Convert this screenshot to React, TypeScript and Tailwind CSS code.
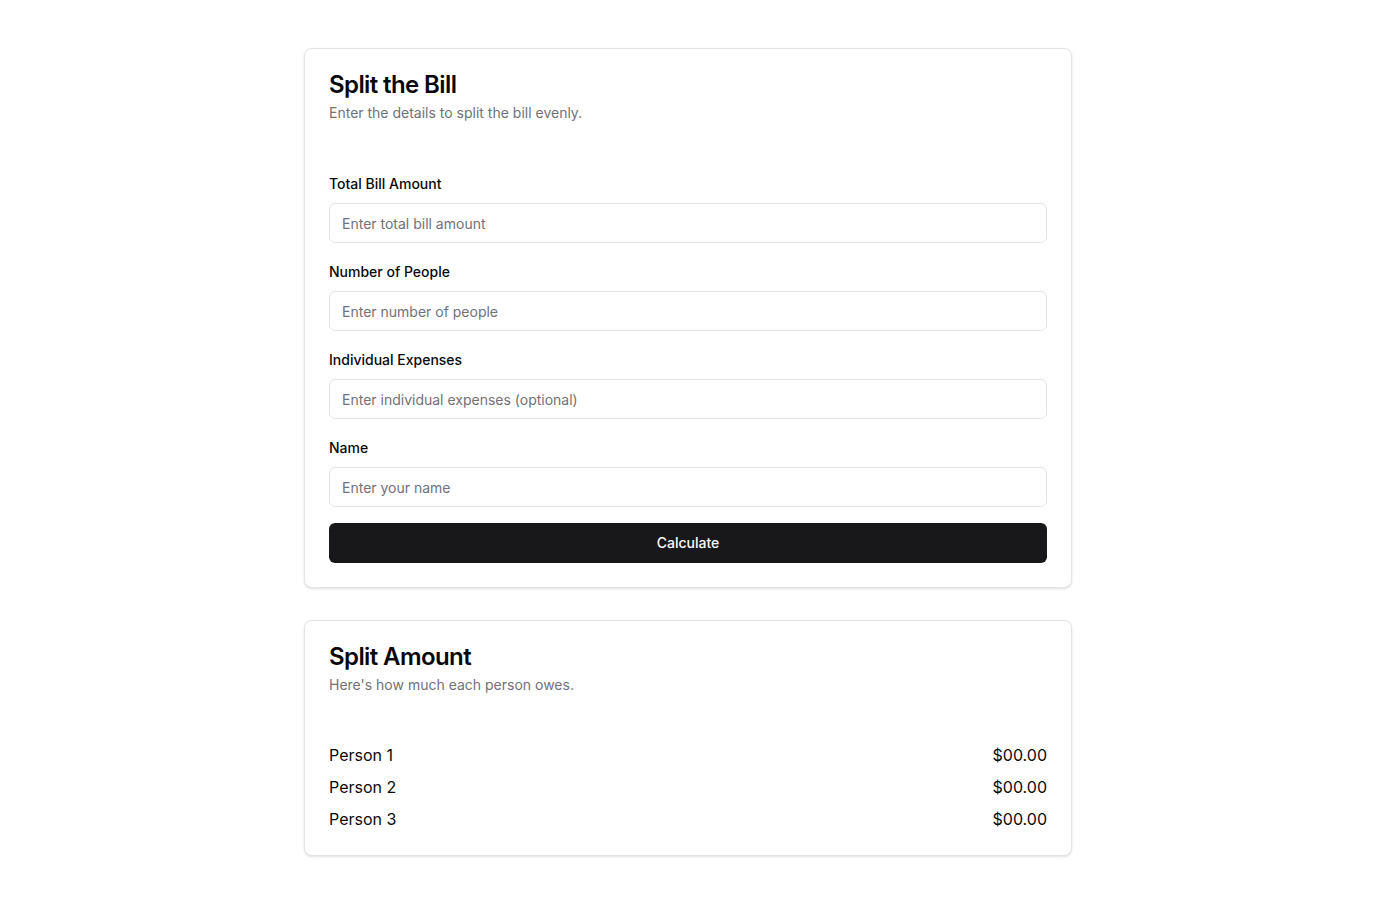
import { useState } from "react"

const fields = [
  { id: "total", label: "Total Bill Amount", placeholder: "Enter total bill amount" },
  { id: "people", label: "Number of People", placeholder: "Enter number of people" },
  { id: "expenses", label: "Individual Expenses", placeholder: "Enter individual expenses (optional)" },
  { id: "name", label: "Name", placeholder: "Enter your name" },
]

const people = ["Person 1", "Person 2", "Person 3"]

export default function App() {
  const [values, setValues] = useState<Record<string, string>>({})

  return (
    <div className="min-h-screen bg-white font-['Inter',sans-serif] text-[#09090b]">
      <div className="mx-auto max-w-3xl py-12 space-y-8">
        <div className="rounded-lg border border-[#e4e4e7] bg-white shadow-sm">
          <div className="flex flex-col space-y-1.5 p-6">
            <h3 className="text-2xl font-semibold leading-none tracking-tight">Split the Bill</h3>
            <p className="text-sm text-[#71717a]">Enter the details to split the bill evenly.</p>
          </div>
          <div className="p-6">
            <form className="space-y-4" onSubmit={(e) => e.preventDefault()}>
              {fields.map((f) => (
                <div key={f.id} className="space-y-2">
                  <div>
                    <label htmlFor={f.id} className="text-sm font-medium leading-none">
                      {f.label}
                    </label>
                  </div>
                  <input
                    id={f.id}
                    value={values[f.id] || ""}
                    onChange={(e) => setValues({ ...values, [f.id]: e.target.value })}
                    placeholder={f.placeholder}
                    className="flex h-10 w-full rounded-md border border-[#e4e4e7] bg-white px-3 py-2 text-sm placeholder:text-[#71717a] outline-none"
                  />
                </div>
              ))}
              <button
                type="submit"
                className="inline-flex h-10 w-full items-center justify-center rounded-md bg-[#18181b] px-4 py-2 text-sm font-medium text-[#fafafa]"
              >
                Calculate
              </button>
            </form>
          </div>
        </div>

        <div className="rounded-lg border border-[#e4e4e7] bg-white shadow-sm">
          <div className="flex flex-col space-y-1.5 p-6">
            <h3 className="text-2xl font-semibold leading-none tracking-tight">Split Amount</h3>
            <p className="text-sm text-[#71717a]">Here's how much each person owes.</p>
          </div>
          <div className="p-6 space-y-2">
            {people.map((p) => (
              <div key={p} className="flex items-center justify-between">
                <span>{p}</span>
                <span>$00.00</span>
              </div>
            ))}
          </div>
        </div>
      </div>
    </div>
  )
}
